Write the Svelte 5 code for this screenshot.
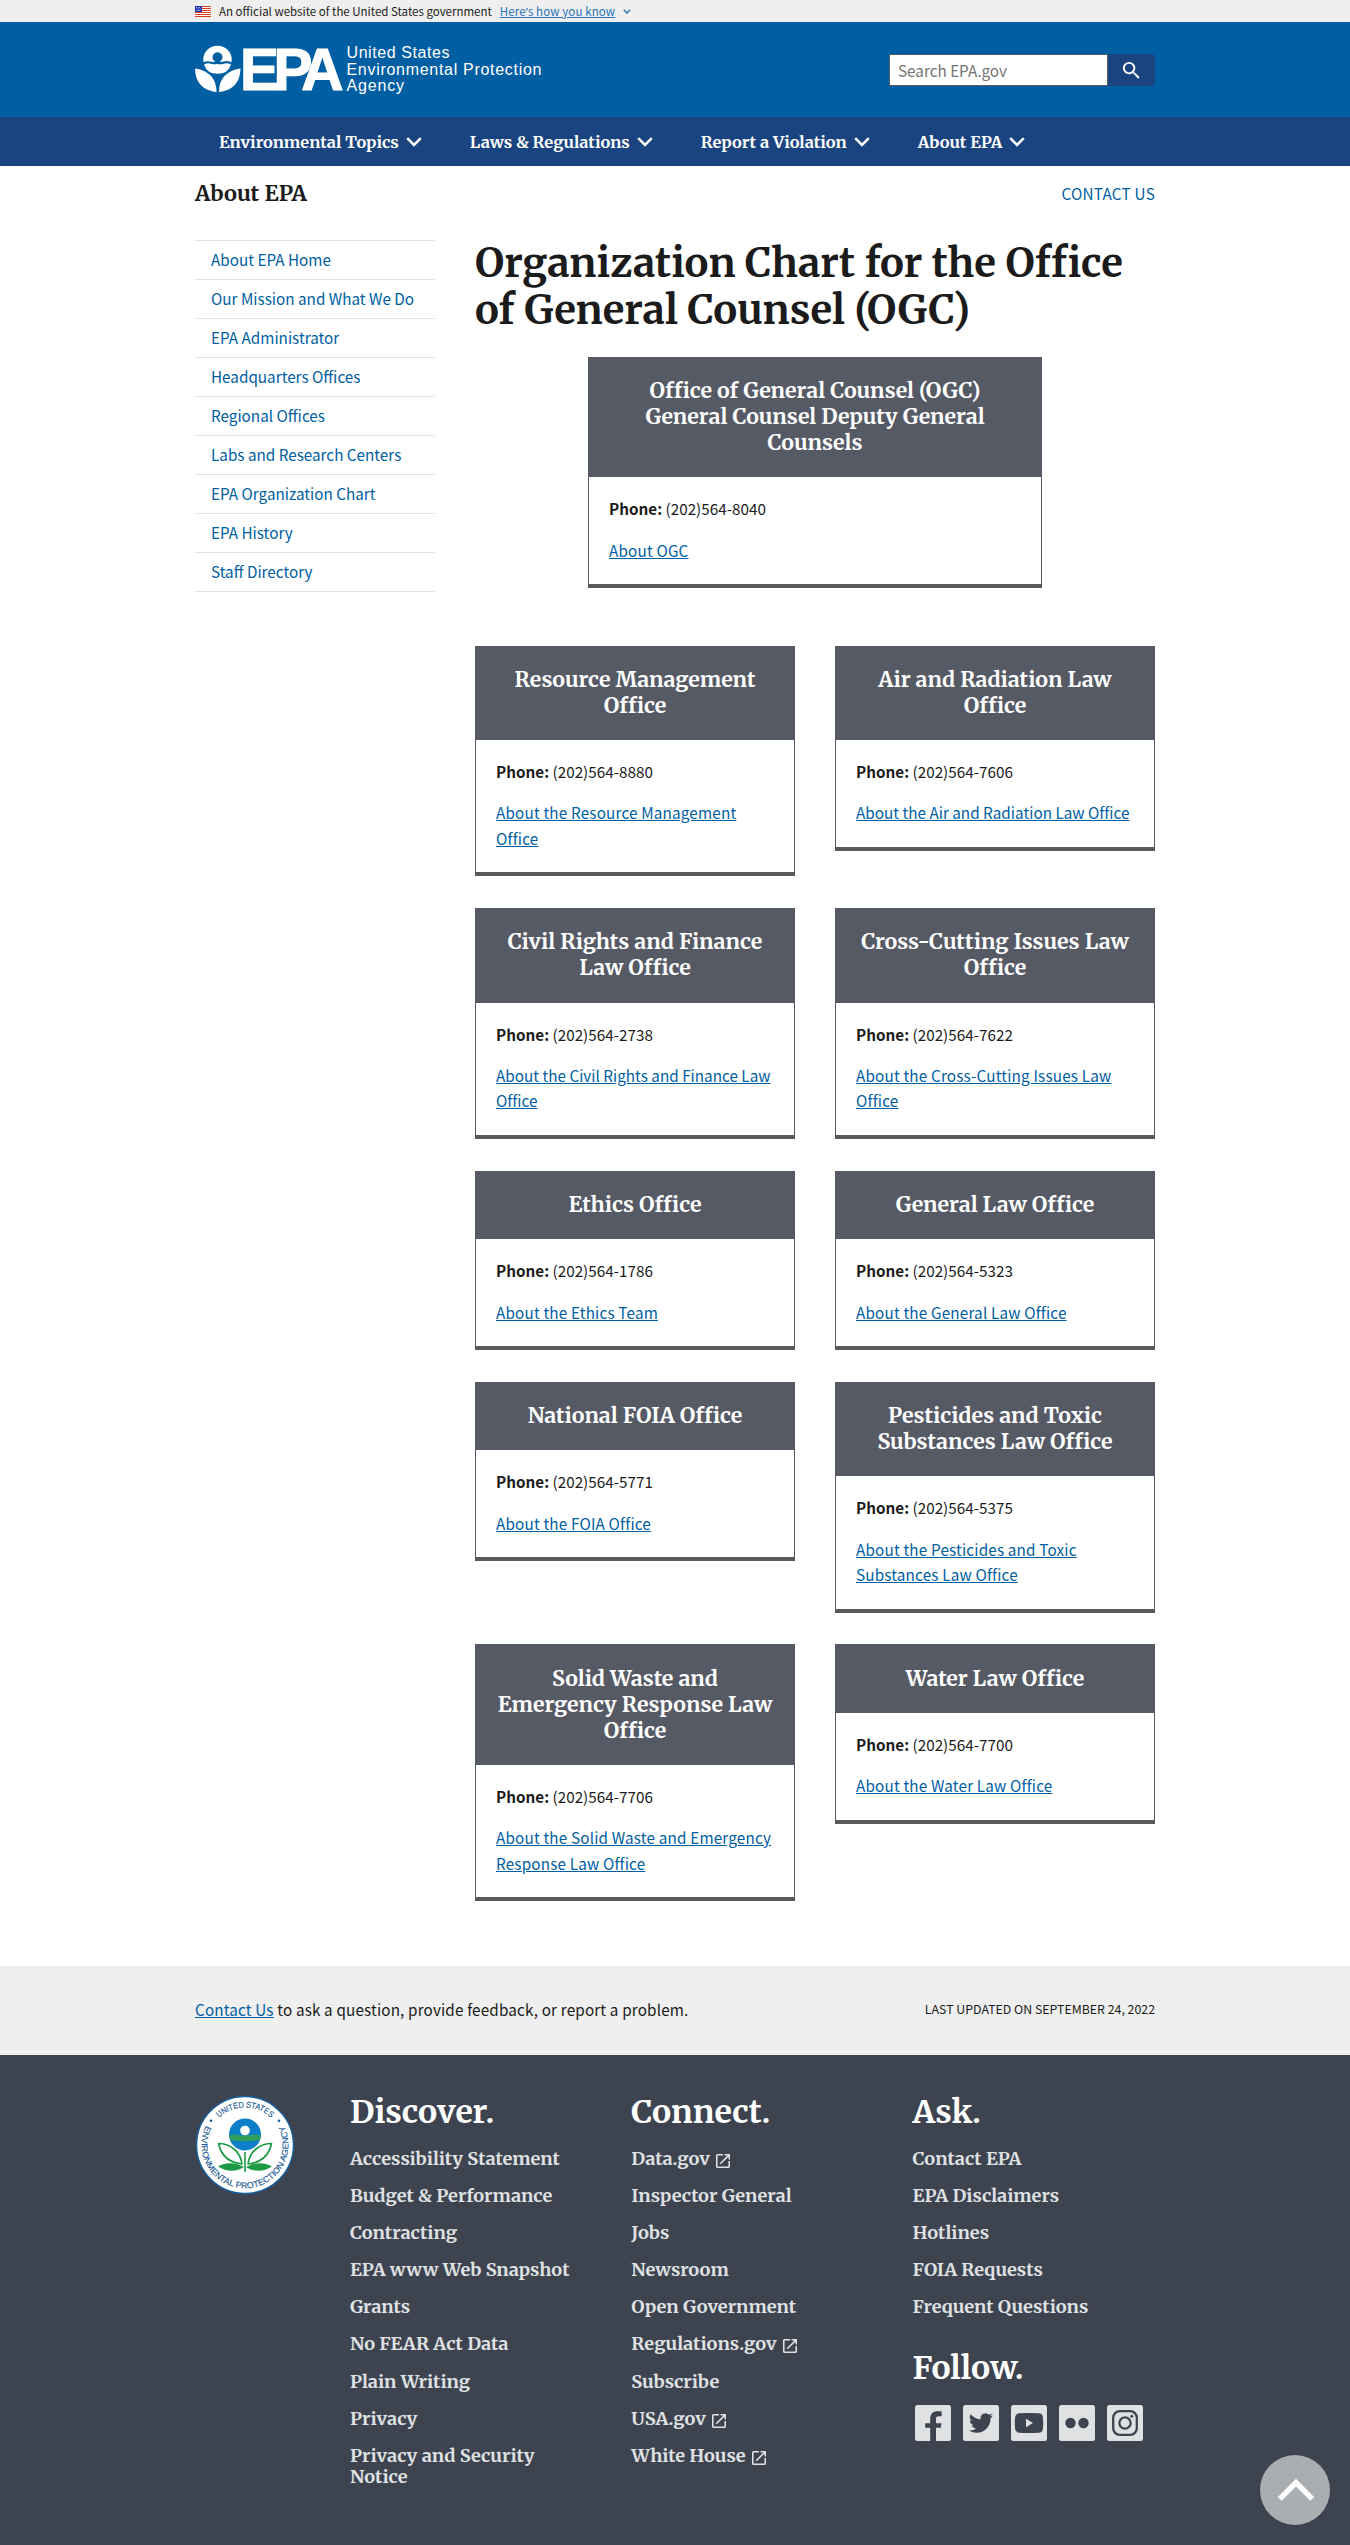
<script>
  const navItems = ['Environmental Topics', 'Laws & Regulations', 'Report a Violation', 'About EPA'];

  const sideLinks = [
    'About EPA Home',
    'Our Mission and What We Do',
    'EPA Administrator',
    'Headquarters Offices',
    'Regional Offices',
    'Labs and Research Centers',
    'EPA Organization Chart',
    'EPA History',
    'Staff Directory',
  ];

  const lead = {
    title: ['Office of General Counsel (OGC)', 'General Counsel Deputy General', 'Counsels'],
    phone: '(202)564-8040',
    link: ['About OGC'],
  };

  const offices = [
    { title: ['Resource Management', 'Office'], phone: '(202)564-8880', link: ['About the Resource Management', 'Office'] },
    { title: ['Air and Radiation Law', 'Office'], phone: '(202)564-7606', link: ['About the Air and Radiation Law Office'], tight: true },
    { title: ['Civil Rights and Finance', 'Law Office'], phone: '(202)564-2738', link: ['About the Civil Rights and Finance Law', 'Office'], tight: true },
    { title: ['Cross-Cutting Issues Law', 'Office'], phone: '(202)564-7622', link: ['About the Cross-Cutting Issues Law', 'Office'] },
    { title: ['Ethics Office'], phone: '(202)564-1786', link: ['About the Ethics Team'] },
    { title: ['General Law Office'], phone: '(202)564-5323', link: ['About the General Law Office'] },
    { title: ['National FOIA Office'], phone: '(202)564-5771', link: ['About the FOIA Office'] },
    { title: ['Pesticides and Toxic', 'Substances Law Office'], phone: '(202)564-5375', link: ['About the Pesticides and Toxic', 'Substances Law Office'] },
    { title: ['Solid Waste and', 'Emergency Response Law', 'Office'], phone: '(202)564-7706', link: ['About the Solid Waste and Emergency', 'Response Law Office'] },
    { title: ['Water Law Office'], phone: '(202)564-7700', link: ['About the Water Law Office'] },
  ];

  const discover = [
    'Accessibility Statement',
    'Budget & Performance',
    'Contracting',
    'EPA www Web Snapshot',
    'Grants',
    'No FEAR Act Data',
    'Plain Writing',
    'Privacy',
    'Privacy and Security Notice',
  ];
  const connect = [
    { label: 'Data.gov', external: true },
    { label: 'Inspector General' },
    { label: 'Jobs' },
    { label: 'Newsroom' },
    { label: 'Open Government' },
    { label: 'Regulations.gov', external: true },
    { label: 'Subscribe' },
    { label: 'USA.gov', external: true },
    { label: 'White House', external: true },
  ];
  const ask = ['Contact EPA', 'EPA Disclaimers', 'Hotlines', 'FOIA Requests', 'Frequent Questions'];
</script>

{#snippet card(item)}
  <article class="card">
    <h2>{#each item.title as line}<span class="line">{line}</span>{/each}</h2>
    <div class="card-body">
      <p><strong>Phone:</strong> {item.phone}</p>
      <p><a href="#office" class:tight={item.tight}>{#each item.link as line, i}{#if i > 0}<br />{/if}{line}{/each}</a></p>
    </div>
  </article>
{/snippet}

<div class="banner">
  <div class="wrap banner-inner">
    <svg class="flag" viewBox="0 0 16 11" width="16" height="11">
      <rect width="16" height="11" fill="#fff" />
      {#each [0, 1, 2, 3, 4, 5] as i}
        <rect y={i * 2} width="16" height="1" fill="#db3e1f" />
      {/each}
      <rect width="7" height="6" fill="#1e33b1" />
      <path d="M1 1.5h5M1.5 3h5M1 4.5h5" stroke="#fff" stroke-width=".7" stroke-dasharray=".8 .8" />
    </svg>
    <span class="official">An official website of the United States government</span>
    <a class="know" href="#know">Here<span class="apos">’</span>s how you know</a>
    <svg class="tiny-chevron" viewBox="0 0 8 5" width="8" height="5"><path d="M.8.8 4 4 7.2.8" fill="none" stroke="#2672b5" stroke-width="1.4" /></svg>
  </div>
</div>

<header>
  <div class="wrap header-inner">
    <svg class="logo" viewBox="195 30 350 75" width="350" height="75">
      <g fill="#fff">
        <path d="M203.300 59.500a14.200 13.800 0 0 1 28.400 0L231.500 62.300Q227 60.200 223.500 61.600Q221.500 62.300 219.800 61.600A5 5 0 1 0 215.200 61.600Q213.500 62.300 211 61.700Q207 60.500 203.500 62.300Z" />
        <path d="M204 64.400Q207.800 62.500 211 63.700Q214 64.700 217.500 63.900Q221 64.700 224 63.700Q227.200 62.500 231 64.400Q228 73.800 217.500 73.800Q207 73.800 204 64.400Z" />
        <path d="M195 68.500C204 69.500 212 74.500 215 82.500Q216.300 86.500 216.600 92C204 90.500 195.500 84 195 68.500Z" />
        <path d="M240.500 68.500C231.500 69.500 223.500 74.500 220.500 82.500Q219.200 86.500 218.900 92C231.500 90.500 240 84 240.500 68.500Z" />
      </g>
      <text class="mark" transform="translate(240 90) scale(.975 1)" dx="0 -5.600 -7.200">EPA</text>
      <g class="agency" fill="#fff">
        <text x="346.500" y="58" textLength="103">United States</text>
        <text x="346.500" y="74.600" textLength="195">Environmental Protection</text>
        <text x="346.500" y="91" textLength="57.500">Agency</text>
      </g>
    </svg>
    <form class="search">
      <input type="text" placeholder="Search EPA.gov" aria-label="Search" />
      <button type="button" aria-label="Search">
        <svg viewBox="0 0 24 24" width="23" height="23"><path fill="#fff" d="M15.500 14h-.79l-.28-.27A6.471 6.471 0 0 0 16 9.500 6.500 6.500 0 1 0 9.500 16c1.610 0 3.090-.59 4.230-1.570l.27.28v.79l5 4.990L20.490 19l-4.990-5zm-6 0C7.010 14 5 11.990 5 9.500S7.010 5 9.500 5 14 7.010 14 9.500 11.990 14 9.500 14z" /></svg>
      </button>
    </form>
  </div>
</header>

<nav class="primary">
  <div class="wrap nav-inner">
    {#each navItems as item}
      <a href="#menu">{item}
        <svg viewBox="0 0 16 10" width="16" height="10"><path d="M1.200 1.200 8 8l6.800-6.800" fill="none" stroke="#fff" stroke-width="2.500" /></svg>
      </a>
    {/each}
  </div>
</nav>

<div class="wrap section-bar">
  <span class="section-title">About EPA</span>
  <a href="#contact">CONTACT US</a>
</div>

<div class="wrap layout">
  <aside>
    <ul>
      {#each sideLinks as l}<li><a href="#side">{l}</a></li>{/each}
    </ul>
  </aside>
  <main>
    <h1>Organization Chart for the Office<br />of General Counsel (OGC)</h1>
    <div class="lead">{@render card(lead)}</div>
    <div class="grid">
      {#each offices as o}{@render card(o)}{/each}
    </div>
  </main>
</div>

<div class="contact-bar">
  <div class="wrap contact-inner">
    <span class="contact-text"><a href="#contact">Contact Us</a> to ask a question, provide feedback, or report a problem.</span>
    <span class="updated">LAST UPDATED ON SEPTEMBER 24, 2022</span>
  </div>
</div>

<footer>
  <div class="wrap footer-inner">
    <svg class="seal" viewBox="0 0 100 100" width="100" height="100">
      <defs>
        <path id="arc-top" d="M12.500 50A37.500 37.500 0 0 1 87.500 50" />
        <path id="arc-low" d="M11.800 29A43.500 43.500 0 1 0 88.200 29" />
      </defs>
      <circle cx="50" cy="50" r="48.500" fill="#fff" stroke="#155f9c" stroke-width="1.500" />
      <text class="seal-text"><textPath href="#arc-top" startOffset="50%" text-anchor="middle" textLength="57" lengthAdjust="spacingAndGlyphs">UNITED STATES</textPath></text>
      <text class="seal-text"><textPath href="#arc-low" startOffset="50%" text-anchor="middle" textLength="176" lengthAdjust="spacingAndGlyphs">ENVIRONMENTAL PROTECTION AGENCY</textPath></text>
      <circle cx="16" cy="25.700" r="1.300" fill="#1a5a94" />
      <circle cx="84" cy="25.700" r="1.300" fill="#1a5a94" />
      <circle cx="50" cy="39.500" r="16" fill="#0b7fc7" />
      <path d="M34.400 40.500q4-2 8-.8t7.600.8 7.600-.8 8 .8l-.8 4.500q-14.800 2.500-29.600 0Z" fill="#2f9e5d" />
      <circle cx="50" cy="35.500" r="4.800" fill="#fff" />
      <g fill="#fff" stroke="#1d9a46" stroke-width="1.700" stroke-linejoin="round">
        <path d="M23.500 48.500C34 48.500 45 55 47 69 33 67.500 26 60 23.500 48.500Z" />
        <path d="M76.500 48.500C66 48.500 55 55 53 69 67 67.500 74 60 76.500 48.500Z" />
      </g>
      <path d="M23 71.500C32 66 42 68 49 72 42 77 31 77 23 71.500ZM77 71.500C68 66 58 68 51 72 58 77 69 77 77 71.500Z" fill="#1d9a46" />
      <path d="M50 57v20" stroke="#1d9a46" stroke-width="1.600" />
    </svg>

    <section class="col">
      <h2>Discover.</h2>
      <ul>{#each discover as l}<li><a href="#discover">{l}</a></li>{/each}</ul>
    </section>
    <section class="col">
      <h2>Connect.</h2>
      <ul>
        {#each connect as l}
          <li><a href="#connect">{l.label}{#if l.external}<svg class="ext" viewBox="3 3 18 18" width="14" height="14"><path fill="currentColor" d="M19 19H5V5h7V3H5a2 2 0 0 0-2 2v14a2 2 0 0 0 2 2h14c1.100 0 2-.9 2-2v-7h-2v7zM14 3v2h3.590l-9.830 9.830 1.410 1.410L19 6.410V10h2V3h-7z" /></svg>{/if}</a></li>
        {/each}
      </ul>
    </section>
    <section class="col">
      <h2>Ask.</h2>
      <ul>{#each ask as l}<li><a href="#ask">{l}</a></li>{/each}</ul>
      <h2 class="follow">Follow.</h2>
      <div class="social">
        <svg viewBox="0 0 36 36"><rect width="36" height="36" rx="2.500" /><path class="ink" d="M15.200 36V22.800h-5v-4.600h5v-4.400c0-5 2.900-7.500 7.200-7.500 2 0 3.800.2 4.300.2v4.700h-2.900c-2.400 0-2.800 1.200-2.800 2.800v4.200h5.500l-.7 4.600H21V36z" /></svg>
        <svg viewBox="0 0 36 36"><rect width="36" height="36" rx="2.500" /><path class="ink" transform="translate(6 6)" d="M23.950 4.570a10 10 0 0 1-2.820.77 4.960 4.960 0 0 0 2.160-2.720c-.95.550-2 .950-3.130 1.180a4.920 4.920 0 0 0-8.380 4.480C7.690 8.090 4.070 6.130 1.640 3.160a4.920 4.920 0 0 0 1.520 6.570 4.900 4.900 0 0 1-2.230-.61v.06a4.920 4.920 0 0 0 3.950 4.830 4.990 4.990 0 0 1-2.210.08 4.940 4.940 0 0 0 4.600 3.420A9.870 9.870 0 0 1 0 19.540a13.990 13.990 0 0 0 7.550 2.210c9.050 0 14-7.500 14-13.980 0-.21 0-.42-.02-.63a9.940 9.940 0 0 0 2.420-2.570z" /></svg>
        <svg viewBox="0 0 36 36"><rect width="36" height="36" rx="2.500" /><path class="ink" d="M8 8.300q10-.8 20 0 3.300.3 3.800 3.500.8 6.200 0 12.400-.5 3.200-3.800 3.500-10 .8-20 0-3.300-.3-3.800-3.500-.8-6.200 0-12.400.5-3.200 3.800-3.500z" /><path d="M15 13.800v8.400l7-4.200z" /></svg>
        <svg viewBox="0 0 36 36"><rect width="36" height="36" rx="2.500" /><circle class="ink" cx="11.500" cy="18" r="5.200" /><circle class="ink" cx="24.500" cy="18" r="5.200" /></svg>
        <svg viewBox="0 0 36 36"><rect width="36" height="36" rx="2.500" /><g class="outline"><rect x="6.200" y="6.200" width="23.600" height="23.600" rx="6.500" /><circle cx="18" cy="18" r="5.600" /></g><circle class="ink" cx="24.800" cy="11.300" r="1.500" /></svg>
      </div>
    </section>
  </div>
</footer>

<a class="to-top" href="#top" aria-label="Back to top">
  <svg viewBox="0 0 70 70" width="70" height="70"><path d="M19.800 43.800 36 27.500l16.200 16.300" fill="none" stroke="#fff" stroke-width="5.400" /></svg>
</a>

<style>
  :global(body) {
    margin: 0;
    background: #fff;
    color: #1b1b1b;
    font-family: 'Noto Sans CJK SC', 'Noto Sans', sans-serif;
    font-size: 15.27px;
    line-height: 25.44px;
  }
  :global(*) { box-sizing: border-box; }
  a { color: #005ea2; text-decoration: none; }
  ul { list-style: none; margin: 0; padding: 0; }
  h1, h2, p { margin: 0; }
  svg { display: block; flex: none; }
  .wrap { width: 960px; margin: 0 auto; }

  .banner { height: 22px; background: #efefef; }
  .banner-inner { display: flex; align-items: center; height: 22px; font-size: 11.5px; line-height: 22px; }
  .flag { margin-right: 8px; }
  .know { margin: 0 8px 0 8px; color: #2672b5; letter-spacing: .12px; text-decoration: underline; }
  .apos { font-family: 'Noto Sans', sans-serif; }

  header { height: 95px; background: #005ea2; }
  .header-inner { display: flex; justify-content: space-between; padding-top: 8px; }
  .mark { fill: #fff; stroke: #fff; stroke-width: 1.2; font: bold 60px 'Liberation Sans', sans-serif; }
  .agency { font: 16px 'Liberation Sans', sans-serif; }
  .search { display: flex; margin-top: 24px; height: 32px; }
  input {
    width: 219px;
    height: 32px;
    padding: 0 8px 1px;
    border: 1px solid #565c65;
    border-radius: 0;
    background: #fff;
    font: 15.27px 'Noto Sans CJK SC', 'Noto Sans', sans-serif;
  }
  input::placeholder { color: #757575; opacity: 1; }
  button {
    display: flex;
    align-items: center;
    justify-content: center;
    width: 47px;
    height: 32px;
    padding: 0;
    border: 0;
    border-radius: 0 4px 4px 0;
    background: #1a4480;
  }

  .primary { height: 49px; background: #1a4480; }
  .nav-inner { display: flex; }
  .nav-inner a {
    display: flex;
    align-items: center;
    gap: 7px;
    height: 49px;
    padding: 0 24px;
    color: #fff;
    font: bold 16.4px/20px Merriweather, serif;
  }

  .section-bar { display: flex; justify-content: space-between; align-items: center; height: 56px; letter-spacing: .25px; }
  .section-title { font: bold 21.700px/28px Merriweather, serif; letter-spacing: 0; }

  .layout { display: flex; gap: 40px; height: 1744px; padding-top: 18px; }
  aside { width: 240px; }
  aside ul { border-top: 1px solid #dfe1e2; }
  aside li { height: 39px; padding-left: 16px; border-bottom: 1px solid #dfe1e2; line-height: 36px; }

  main { width: 680px; }
  h1 { padding-bottom: 24px; font: bold 40px/46.500px Merriweather, serif; }
  .lead { width: 454px; margin: 0 auto 57.300px; }
  .grid { display: grid; grid-template-columns: 320px 320px; gap: 31.900px 40px; align-items: start; }
  .card { border: 1px solid #565a65; border-bottom: 4px solid #5a5a5d; }
  .card h2 {
    padding: 20.200px 0 21.200px;
    background: #565a65;
    color: #fff;
    font: bold 21.300px/26px Merriweather, serif;
    text-align: center;
  }
  .line { display: block; white-space: nowrap; }
  .card-body { display: grid; gap: 16px; padding: 19px 20px 21px; white-space: nowrap; }
  .card-body a, .contact-text a { text-decoration: underline; }
  .card-body a { letter-spacing: .17px; }
  .card-body a.tight { letter-spacing: .01px; }

  .contact-bar { background: #efefef; }
  .contact-inner { display: flex; justify-content: space-between; align-items: center; height: 89px; padding-bottom: 1.500px; }
  .contact-text { letter-spacing: .15px; }
  .updated { font-size: 12.350px; }

  footer { height: 490px; background: #3e4350; color: #fff; }
  .footer-inner { display: flex; padding-top: 38px; }
  .seal { margin: 2px 55px 0 0; }
  .col { flex: none; width: 281.300px; }
  .col h2 { font: bold 32px/38px Merriweather, serif; }
  .col ul { display: grid; gap: 16.100px; padding-top: 17px; }
  .col li { width: 230px; font: bold 18.200px/21px Merriweather, serif; }
  .col a { color: #dfe1e2; }
  .ext { display: inline-block; margin-left: 6px; vertical-align: -3px; }
  .col .follow { margin-top: 32px; }
  .social { display: flex; gap: 12px; padding: 18px 0 0 2px; }
  .social svg { width: 36px; height: 36px; fill: #dfe1e2; }
  .social .ink { fill: #3e4350; }
  .outline { fill: none; stroke: #3e4350; stroke-width: 2.3; }
  .outline rect, .outline circle { fill: none; }
  .seal-text { fill: #1a5a94; stroke: #1a5a94; stroke-width: .15; font: 8.5px 'Liberation Sans', sans-serif; }

  .to-top {
    position: fixed;
    right: 20px;
    bottom: 20px;
    border-radius: 50%;
    background: #a9aeb1;
  }
</style>
